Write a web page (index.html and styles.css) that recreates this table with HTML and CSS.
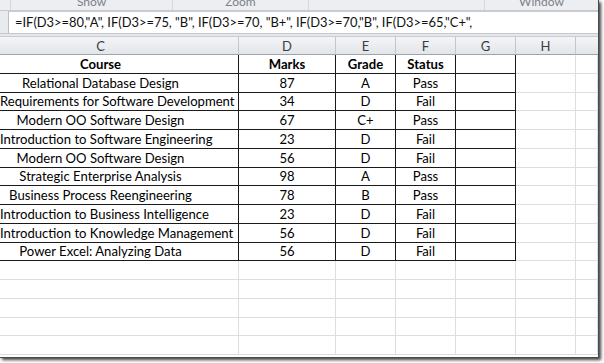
FILE: index.html
```html
<!DOCTYPE html>
<html>
<head>
<meta charset="utf-8">
<link rel="stylesheet" href="styles.css">
</head>
<body>
<div class="window">
  <div class="ribbon">
    <div class="group g-edge"></div>
    <div class="group g-show"><span class="glabel">Show</span></div>
    <div class="group g-zoom"><span class="glabel">Zoom</span></div>
    <div class="group g-blank"></div>
    <div class="group g-window"><span class="glabel">Window</span></div>
  </div>
  <div class="formula-wrap">
    <div class="formula">=IF(D3&gt;=80,"A", IF(D3&gt;=75, "B", IF(D3&gt;=70, "B+", IF(D3&gt;=70,"B", IF(D3&gt;=65,"C+",</div>
  </div>
  <div class="band"></div>
  <div class="sheet">
    <div class="ch c">C</div><div class="ch">D</div><div class="ch">E</div><div class="ch">F</div><div class="ch">G</div><div class="ch">H</div><div class="ch last"></div>

    <div class="t c b">Course</div><div class="t b">Marks</div><div class="t b">Grade</div><div class="t b">Status</div><div class="t"></div><div class="g"></div><div class="g"></div>
    <div class="t c">Relational Database Design</div><div class="t">87</div><div class="t">A</div><div class="t">Pass</div><div class="t"></div><div class="g"></div><div class="g"></div>
    <div class="t c">Requirements for Software Development</div><div class="t">34</div><div class="t">D</div><div class="t">Fail</div><div class="t"></div><div class="g"></div><div class="g"></div>
    <div class="t c">Modern OO Software Design</div><div class="t">67</div><div class="t">C+</div><div class="t">Pass</div><div class="t"></div><div class="g"></div><div class="g"></div>
    <div class="t c">Introduction to Software Engineering</div><div class="t">23</div><div class="t">D</div><div class="t">Fail</div><div class="t"></div><div class="g"></div><div class="g"></div>
    <div class="t c">Modern OO Software Design</div><div class="t">56</div><div class="t">D</div><div class="t">Fail</div><div class="t"></div><div class="g"></div><div class="g"></div>
    <div class="t c">Strategic Enterprise Analysis</div><div class="t">98</div><div class="t">A</div><div class="t">Pass</div><div class="t"></div><div class="g"></div><div class="g"></div>
    <div class="t c">Business Process Reengineering</div><div class="t">78</div><div class="t">B</div><div class="t">Pass</div><div class="t"></div><div class="g"></div><div class="g"></div>
    <div class="t c">Introduction to Business Intelligence</div><div class="t">23</div><div class="t">D</div><div class="t">Fail</div><div class="t"></div><div class="g"></div><div class="g"></div>
    <div class="t c">Introduction to Knowledge Management</div><div class="t">56</div><div class="t">D</div><div class="t">Fail</div><div class="t"></div><div class="g"></div><div class="g"></div>
    <div class="t c">Power Excel: Analyzing Data</div><div class="t">56</div><div class="t">D</div><div class="t">Fail</div><div class="t"></div><div class="g"></div><div class="g"></div>

    <div class="g"></div><div class="g"></div><div class="g"></div><div class="g"></div><div class="g"></div><div class="g"></div><div class="g"></div>
    <div class="g"></div><div class="g"></div><div class="g"></div><div class="g"></div><div class="g"></div><div class="g"></div><div class="g"></div>
    <div class="g"></div><div class="g"></div><div class="g"></div><div class="g"></div><div class="g"></div><div class="g"></div><div class="g"></div>
    <div class="g"></div><div class="g"></div><div class="g"></div><div class="g"></div><div class="g"></div><div class="g"></div><div class="g"></div>
    <div class="g"></div><div class="g"></div><div class="g"></div><div class="g"></div><div class="g"></div><div class="g"></div><div class="g"></div>
  </div>
</div>
</body>
</html>
```
FILE: styles.css
```css
html, body {
  margin: 0;
  padding: 0;
  background: #ffffff;
}
body {
  width: 604px;
  height: 363px;
  overflow: hidden;
  font-family: Lato, "Open Sans", sans-serif;
}
.window {
  width: 599px;
  height: 358px;
  overflow: hidden;
  background: #ffffff;
  border-right: 1px solid #4a4a4a;
  border-bottom: 1px solid #4a4a4a;
  box-sizing: border-box;
  box-shadow: 2px 2px 3px rgba(0, 0, 0, 0.75);
  display: flex;
  flex-direction: column;
}
.ribbon {
  height: 10px;
  flex: none;
  display: flex;
  background: #eceef1;
  border-bottom: 1px solid #c6cad0;
  overflow: hidden;
}
.group {
  height: 10px;
  border-right: 1px solid #d3d6db;
  display: flex;
  justify-content: center;
  overflow: hidden;
}
.g-edge { width: 10px; }
.g-show { width: 161px; }
.g-zoom { width: 135px; }
.g-blank { width: 175px; }
.g-window { flex: 1; border-right: none; }
.glabel {
  font-size: 12px;
  line-height: 12px;
  margin-top: -4px;
  color: #7d8187;
}
.formula-wrap {
  flex: none;
  height: 22px;
  background: #e8eaed;
  padding-left: 8px;
  border-bottom: 1px solid #c4c8ce;
}
.formula {
  height: 21px;
  background: #ffffff;
  border-left: 1px solid #b9bec6;
  border-top: 1px solid #c9cdd3;
  padding-left: 6px;
  font-size: 12.9px;
  line-height: 21px;
  color: #111;
  white-space: nowrap;
  overflow: hidden;
}
.band {
  flex: none;
  height: 2px;
  background: #e4e7eb;
  border-bottom: 1px solid #c8ccd2;
}
.sheet {
  display: grid;
  grid-template-columns: 239px 97px 60px 60px 60px 60px 1fr;
  grid-template-rows: 18px;
  grid-auto-rows: 18.75px;
}
.ch {
  box-sizing: border-box;
  background: linear-gradient(#f4f5f7, #e2e5e9);
  border-right: 1px solid #c3c7cd;
  border-bottom: 1px solid #9ea4ac;
  color: #3a3d42;
  font-size: 13px;
  display: flex;
  align-items: center;
  justify-content: center;
}
.ch.last { border-right: none; }
.g {
  box-sizing: border-box;
  border-right: 1px solid #dcdee1;
  border-bottom: 1px solid #dcdee1;
}
.t {
  box-sizing: border-box;
  border-right: 1px solid #1a1a1a;
  border-bottom: 1px solid #1a1a1a;
  font-size: 13.1px;
  color: #000;
  display: flex;
  align-items: center;
  justify-content: center;
  white-space: nowrap;
  overflow: visible;
}
.c {
  padding-right: 37px;
  justify-content: safe center;
}
.b { font-weight: bold; }
```
